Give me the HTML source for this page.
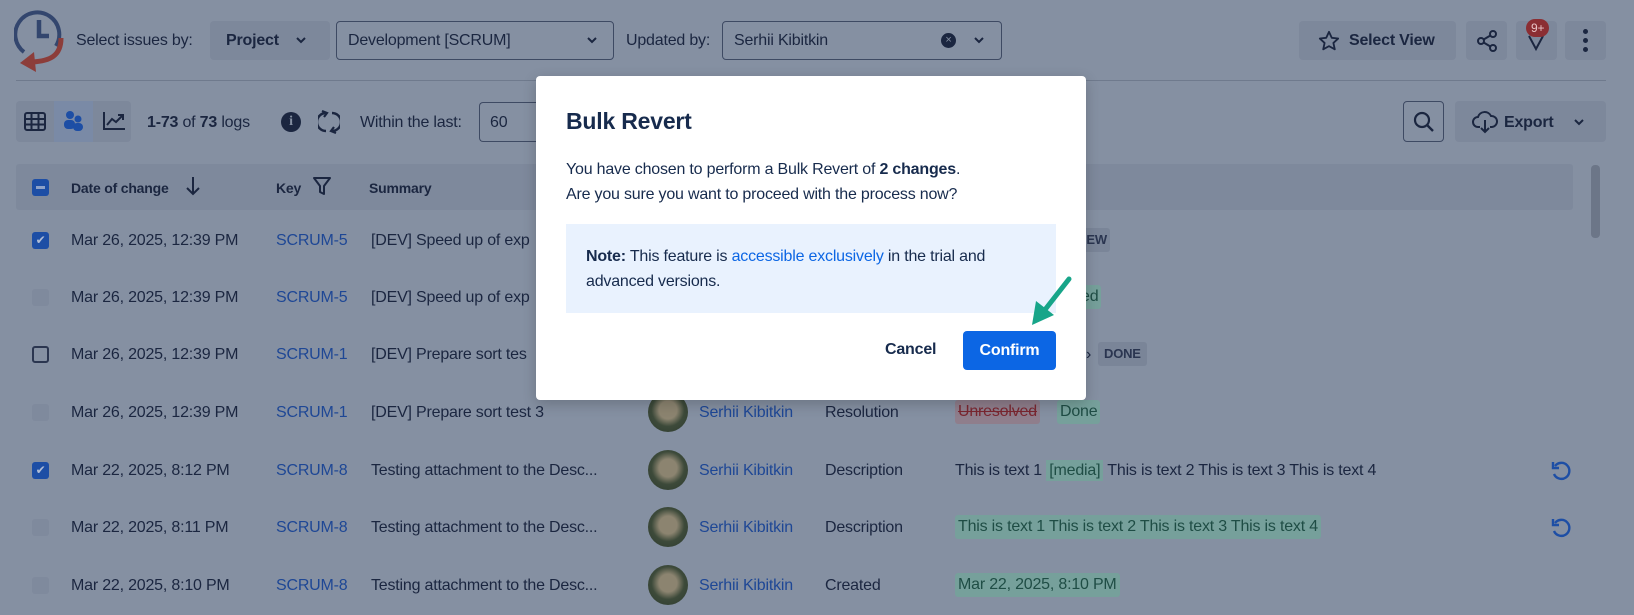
<!DOCTYPE html>
<html><head><meta charset="utf-8"><style>
*{box-sizing:border-box;margin:0;padding:0}
body{width:1634px;height:615px;overflow:hidden;background:#8590a2;font-family:"Liberation Sans",sans-serif;color:#1b2640;font-size:16px;position:relative;letter-spacing:-0.2px}
.a{position:absolute;white-space:nowrap}
.btn{position:absolute;background:#7d889b;border-radius:4px}
.sel{position:absolute;border:1px solid #3e4a63;border-radius:4px}
.lnk{color:#1e4795}
.cb{position:absolute;width:17px;height:17px;border-radius:3px;left:32px}
.badge{position:absolute;border-radius:3px;padding:0 3px;height:24px;line-height:24px}
.g{background:#76a09b;color:#1f4d45}
.chev{position:absolute}
</style></head><body>
<svg width="0" height="0" style="position:absolute"><defs><path id="ch" d="M1 1L5 5L9 1" fill="none" stroke="#1b2640" stroke-width="2"/></defs></svg>
<!-- logo -->
<svg class="a" style="left:14px;top:8px" width="54" height="64" viewBox="0 0 54 64">
<path d="M42 38 A22 22 0 1 0 10 44" fill="none" stroke="#33466e" stroke-width="4"/>
<path d="M25 12 V28 H35" fill="none" stroke="#33466e" stroke-width="4.5"/>
<path d="M47 30 C47 48 36 53 18 54" fill="none" stroke="#8c3d3a" stroke-width="5"/>
<path d="M6 55 L20 44 L22 64 Z" fill="#8c3d3a"/>
</svg>
<div class="a" style="left:76px;top:32px">Select issues by:</div>
<div class="btn" style="left:210px;top:21px;width:120px;height:39px"></div>
<div class="a" style="left:226px;top:32px;font-weight:bold">Project</div>
<svg class="chev" style="left:296px;top:37px" width="10" height="7"><use href="#ch"/></svg>
<div class="sel" style="left:336px;top:21px;width:278px;height:39px"></div>
<div class="a" style="left:348px;top:32px">Development [SCRUM]</div>
<svg class="chev" style="left:587px;top:37px" width="10" height="7"><use href="#ch"/></svg>
<div class="a" style="left:626px;top:32px">Updated by:</div>
<div class="sel" style="left:722px;top:21px;width:280px;height:39px"></div>
<div class="a" style="left:734px;top:32px">Serhii Kibitkin</div>
<div class="a" style="left:941px;top:33px;width:15px;height:15px;border-radius:50%;background:#1b2640;color:#8590a2;font-size:11px;line-height:15px;text-align:center">×</div>
<svg class="chev" style="left:974px;top:37px" width="10" height="7"><use href="#ch"/></svg>
<div class="btn" style="left:1299px;top:21px;width:157px;height:39px"></div>
<svg class="a" style="left:1318px;top:30px" width="22" height="22" viewBox="0 0 24 24"><path d="M12 2l3 6.5 7 .8-5.2 4.8 1.5 7L12 17.6 5.7 21.1l1.5-7L2 9.3l7-.8z" fill="none" stroke="#1b2640" stroke-width="2" stroke-linejoin="round"/></svg>
<div class="a" style="left:1349px;top:32px;font-weight:bold">Select View</div>
<div class="btn" style="left:1466px;top:21px;width:41px;height:39px"></div>
<svg class="a" style="left:1475px;top:29px" width="24" height="24" viewBox="0 0 24 24"><circle cx="18" cy="5" r="3" fill="none" stroke="#1b2640" stroke-width="2"/><circle cx="6" cy="12" r="3" fill="none" stroke="#1b2640" stroke-width="2"/><circle cx="18" cy="19" r="3" fill="none" stroke="#1b2640" stroke-width="2"/><path d="M8.6 10.5l6.8-4M8.6 13.5l6.8 4" stroke="#1b2640" stroke-width="2"/></svg>
<div class="btn" style="left:1516px;top:21px;width:41px;height:39px"></div>
<svg class="a" style="left:1526px;top:32px" width="20" height="20" viewBox="0 0 20 20"><path d="M3 4 L10 17 L17 4" fill="none" stroke="#1b2640" stroke-width="2"/></svg>
<div class="a" style="left:1526px;top:19px;background:#8b2e33;color:#e8c4c6;font-size:12px;border-radius:9px;padding:0 5px;height:18px;line-height:18px">9+</div>
<div class="btn" style="left:1565px;top:21px;width:41px;height:39px"></div>
<div class="a" style="left:1583px;top:29px;width:5px;height:5px;border-radius:50%;background:#1b2640;box-shadow:0 9px 0 #1b2640,0 18px 0 #1b2640"></div>
<div class="a" style="left:16px;top:80px;width:1590px;height:1px;background:#6f7a8d"></div>
<!-- row 2 -->
<div class="btn" style="left:16px;top:101px;width:115px;height:41px"></div>
<div class="a" style="left:54px;top:101px;width:39px;height:41px;background:#7a8aa6"></div>
<svg class="a" style="left:24px;top:112px" width="22" height="19" viewBox="0 0 22 19"><rect x="1" y="1" width="20" height="17" rx="2" fill="none" stroke="#1b2640" stroke-width="2"/><path d="M1 7H21M1 12.5H21M7.5 1V18M14.5 1V18" stroke="#1b2640" stroke-width="2"/></svg>
<svg class="a" style="left:63px;top:110px" width="22" height="22" viewBox="0 0 22 22"><circle cx="7" cy="5" r="4" fill="#1d4ea5"/><circle cx="15" cy="9" r="3.5" fill="#1d4ea5"/><rect x="1" y="10" width="11" height="9" rx="4" fill="#1d4ea5"/><rect x="10" y="13" width="10" height="8" rx="4" fill="#1d4ea5"/></svg>
<svg class="a" style="left:102px;top:111px" width="24" height="20" viewBox="0 0 24 20"><path d="M2 1V18H23" fill="none" stroke="#1b2640" stroke-width="2"/><path d="M5 14L10 8L14 11L21 4M16 4H21V9" fill="none" stroke="#1b2640" stroke-width="2"/></svg>
<div class="a" style="left:147px;top:114px"><b>1-73</b> of <b>73</b> logs</div>
<div class="a" style="left:281px;top:112px;width:20px;height:20px;border-radius:50%;background:#1b2640;color:#8590a2;font-weight:bold;font-size:14px;text-align:center;line-height:20px;font-family:'Liberation Serif',serif">i</div>
<svg class="a" style="left:318px;top:110px" width="22" height="24" viewBox="0 0 22 24"><path d="M8 3 A9 9 0 0 0 8 21" fill="none" stroke="#1b2640" stroke-width="2.4"/><path d="M14 21 A9 9 0 0 0 14 3" fill="none" stroke="#1b2640" stroke-width="2.4"/><path d="M4 1L9 3L6 7M18 23L13 21L16 17" fill="none" stroke="#1b2640" stroke-width="2.2"/></svg>
<div class="a" style="left:360px;top:114px">Within the last:</div>
<div class="sel" style="left:479px;top:102px;width:70px;height:40px;border-right:none"></div>
<div class="a" style="left:490px;top:114px">60</div>
<div class="sel" style="left:1403px;top:101px;width:41px;height:41px"></div>
<svg class="a" style="left:1412px;top:110px" width="24" height="24" viewBox="0 0 24 24"><circle cx="10" cy="10" r="7" fill="none" stroke="#1b2640" stroke-width="2.2"/><path d="M15 15L21 21" stroke="#1b2640" stroke-width="2.4"/></svg>
<div class="btn" style="left:1455px;top:101px;width:151px;height:41px"></div>
<svg class="a" style="left:1472px;top:110px" width="26" height="24" viewBox="0 0 26 24"><path d="M8 17H6A5 5 0 0 1 6 7 A7 7 0 0 1 19 6 A5 5 0 0 1 20 17H18" fill="none" stroke="#1b2640" stroke-width="2"/><path d="M13 10V22M9 18L13 22L17 18" fill="none" stroke="#1b2640" stroke-width="2"/></svg>
<div class="a" style="left:1504px;top:114px;font-weight:bold">Export</div>
<svg class="chev" style="left:1574px;top:119px" width="10" height="7"><use href="#ch"/></svg>
<!-- table header -->
<div class="a" style="left:16px;top:164px;width:1557px;height:46px;background:#7e899c;border-radius:3px"></div>
<div class="a" style="left:1591px;top:165px;width:9px;height:73px;background:#6c7688;border-radius:4px"></div>
<div class="cb" style="top:179px;background:#1d4ea5"><div style="margin:7px 4px;height:3px;background:#8ea2c8"></div></div>
<div class="a" style="left:71px;top:180px;font-size:14px;font-weight:bold">Date of change</div>
<svg class="a" style="left:185px;top:176px" width="16" height="20" viewBox="0 0 16 20"><path d="M8 1V18M2 12L8 18L14 12" fill="none" stroke="#1b2640" stroke-width="2"/></svg>
<div class="a" style="left:276px;top:180px;font-size:14px;font-weight:bold">Key</div>
<svg class="a" style="left:313px;top:176px" width="18" height="20" viewBox="0 0 18 20"><path d="M1 2H17L11 10V18L7 16V10Z" fill="none" stroke="#1b2640" stroke-width="2" stroke-linejoin="round"/></svg>
<div class="a" style="left:369px;top:180px;font-size:14px;font-weight:bold">Summary</div>
<!-- rows -->
<div class="cb" style="top:232px;background:#1d4ea5;color:#b0bdd6;font-size:12px;text-align:center;line-height:17px">&#x2714;</div>
<div class="a" style="left:71px;top:232px">Mar 26, 2025, 12:39 PM</div><div class="a lnk" style="left:276px;top:232px">SCRUM-5</div><div class="a" style="left:371px;top:232px">[DEV] Speed up of exp</div>
<div class="badge" style="left:1080px;top:228px;background:#7a8598;font-size:13px;font-weight:bold;color:#2a3550">IEW</div>
<div class="cb" style="top:289px;background:#7f8a9d"></div>
<div class="a" style="left:71px;top:289px">Mar 26, 2025, 12:39 PM</div><div class="a lnk" style="left:276px;top:289px">SCRUM-5</div><div class="a" style="left:371px;top:289px">[DEV] Speed up of exp</div>
<div class="badge g" style="left:1078px;top:285px">ed</div>
<div class="cb" style="top:346px;border:2px solid #2b3650"></div>
<div class="a" style="left:71px;top:346px">Mar 26, 2025, 12:39 PM</div><div class="a lnk" style="left:276px;top:346px">SCRUM-1</div><div class="a" style="left:371px;top:346px">[DEV] Prepare sort tes</div>
<div class="a" style="left:1086px;top:346px">&#x203A;</div>
<div class="badge" style="left:1098px;top:342px;background:#7a8598;font-size:13px;font-weight:bold;color:#2a3550;padding:0 6px">DONE</div>
<div class="cb" style="top:404px;background:#7f8a9d"></div>
<div class="a" style="left:71px;top:404px">Mar 26, 2025, 12:39 PM</div><div class="a lnk" style="left:276px;top:404px">SCRUM-1</div><div class="a" style="left:371px;top:404px">[DEV] Prepare sort test 3</div>
<div class="a" style="left:825px;top:404px">Resolution</div>
<div class="badge" style="left:955px;top:400px;background:#8f7e8c;color:#7a2630;text-decoration:line-through">Unresolved</div>
<div class="badge g" style="left:1057px;top:400px">Done</div>
<div class="cb" style="top:462px;background:#1d4ea5;color:#b0bdd6;font-size:12px;text-align:center;line-height:17px">&#x2714;</div>
<div class="a" style="left:71px;top:462px">Mar 22, 2025, 8:12 PM</div><div class="a lnk" style="left:276px;top:462px">SCRUM-8</div><div class="a" style="left:371px;top:462px">Testing attachment to the Desc...</div>
<div class="a" style="left:825px;top:462px">Description</div>
<div class="a" style="left:955px;top:462px">This is text 1 <span style="background:#76a09b;color:#1f4d45;padding:2px 3px">[media]</span> This is text 2 This is text 3 This is text 4</div>
<svg class="a" style="left:1550px;top:460px" width="22" height="22" viewBox="0 0 22 22"><path d="M5 6 A8 8 0 1 1 4 14" fill="none" stroke="#1d4ea5" stroke-width="2.4"/><path d="M3 2V8H9" fill="none" stroke="#1d4ea5" stroke-width="2.4"/></svg>
<div class="cb" style="top:519px;background:#7f8a9d"></div>
<div class="a" style="left:71px;top:519px">Mar 22, 2025, 8:11 PM</div><div class="a lnk" style="left:276px;top:519px">SCRUM-8</div><div class="a" style="left:371px;top:519px">Testing attachment to the Desc...</div>
<div class="a" style="left:825px;top:519px">Description</div>
<div class="badge g" style="left:955px;top:515px">This is text 1 This is text 2 This is text 3 This is text 4</div>
<svg class="a" style="left:1550px;top:517px" width="22" height="22" viewBox="0 0 22 22"><path d="M5 6 A8 8 0 1 1 4 14" fill="none" stroke="#1d4ea5" stroke-width="2.4"/><path d="M3 2V8H9" fill="none" stroke="#1d4ea5" stroke-width="2.4"/></svg>
<div class="cb" style="top:577px;background:#7f8a9d"></div>
<div class="a" style="left:71px;top:577px">Mar 22, 2025, 8:10 PM</div><div class="a lnk" style="left:276px;top:577px">SCRUM-8</div><div class="a" style="left:371px;top:577px">Testing attachment to the Desc...</div>
<div class="a" style="left:825px;top:577px">Created</div>
<div class="badge g" style="left:955px;top:573px">Mar 22, 2025, 8:10 PM</div>
<!-- avatars -->
<div class="a" style="left:648px;top:392px;width:40px;height:40px;border-radius:50%;background:radial-gradient(circle at 50% 45%,#8c8470 0 30%,#3d4a3a 55%,#2c3a2e)"></div>
<div class="a" style="left:648px;top:450px;width:40px;height:40px;border-radius:50%;background:radial-gradient(circle at 50% 45%,#8c8470 0 30%,#3d4a3a 55%,#2c3a2e)"></div>
<div class="a" style="left:648px;top:507px;width:40px;height:40px;border-radius:50%;background:radial-gradient(circle at 50% 45%,#8c8470 0 30%,#3d4a3a 55%,#2c3a2e)"></div>
<div class="a" style="left:648px;top:565px;width:40px;height:40px;border-radius:50%;background:radial-gradient(circle at 50% 45%,#8c8470 0 30%,#3d4a3a 55%,#2c3a2e)"></div>
<div class="a lnk" style="left:699px;top:404px">Serhii Kibitkin</div>
<div class="a lnk" style="left:699px;top:462px">Serhii Kibitkin</div>
<div class="a lnk" style="left:699px;top:519px">Serhii Kibitkin</div>
<div class="a lnk" style="left:699px;top:577px">Serhii Kibitkin</div>
<!-- modal -->
<div class="a" style="left:536px;top:76px;width:550px;height:324px;background:#fff;border-radius:4px;box-shadow:0 4px 14px rgba(0,0,0,.2)"></div>
<div class="a" style="left:566px;top:108px;font-size:23px;font-weight:bold;color:#172b4d">Bulk Revert</div>
<div class="a" style="left:566px;top:157px;color:#172b4d;line-height:25px">You have chosen to perform a Bulk Revert of <b>2 changes</b>.<br>Are you sure you want to proceed with the process now?</div>
<div class="a" style="left:566px;top:224px;width:490px;height:89px;background:#e9f2fe"></div>
<div class="a" style="left:586px;top:244px;color:#172b4d;line-height:25px"><b>Note:</b> This feature is <span style="color:#0c66e4">accessible exclusively</span> in the trial and<br>advanced versions.</div>
<div class="a" style="left:885px;top:341px;color:#172b4d;font-weight:bold">Cancel</div>
<div class="a" style="left:963px;top:331px;width:93px;height:39px;background:#0c66e4;border-radius:4px;color:#fff;font-weight:bold;text-align:center;line-height:39px">Confirm</div>
<svg class="a" style="left:1026px;top:275px" width="50" height="55" viewBox="0 0 50 55"><path d="M43 4 L18 36" stroke="#17a589" stroke-width="5" stroke-linecap="round"/><path d="M6 50 L10 26 L28 40 Z" fill="#17a589"/></svg>
</body></html>
